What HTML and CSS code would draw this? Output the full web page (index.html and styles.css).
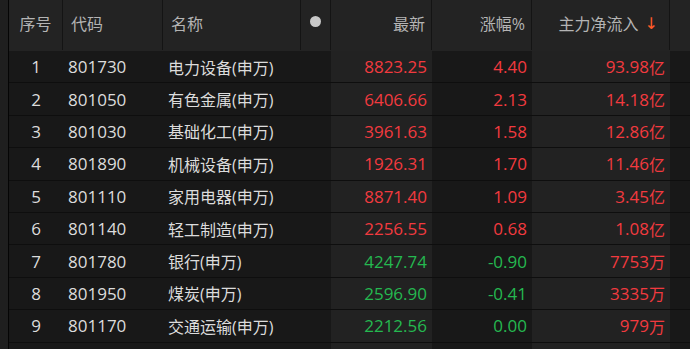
FILE: index.html
```html
<!DOCTYPE html>
<html lang="zh-CN">
<head>
<meta charset="utf-8">
<title>行业资金流向</title>
<link rel="stylesheet" href="styles.css">
</head>
<body>
<div class="page">
  <div class="strip"></div>
  <div class="table">
    <div class="head">
      <div class="hc c-seq">序号</div>
      <div class="hc c-code">代码</div>
      <div class="hc c-name">名称</div>
      <div class="hc c-dot"><span class="dot"></span></div>
      <div class="hc c-num">最新</div>
      <div class="hc c-num">涨幅%</div>
      <div class="hc c-num c-flow">主力净流入<span class="arrow">↓</span></div>
      <div class="hc c-extra"></div>
    </div>

    <div class="row"><div class="c c-seq">1</div><div class="c c-code">801730</div><div class="c c-name">电力设备(申万)</div><div class="c c-dot"></div><div class="c c-num light up">8823.25</div><div class="c c-num up">4.40</div><div class="c c-num light up">93.98<span class="u">亿</span></div><div class="c c-extra"></div></div>
    <div class="row"><div class="c c-seq">2</div><div class="c c-code">801050</div><div class="c c-name">有色金属(申万)</div><div class="c c-dot"></div><div class="c c-num light up">6406.66</div><div class="c c-num up">2.13</div><div class="c c-num light up">14.18<span class="u">亿</span></div><div class="c c-extra"></div></div>
    <div class="row"><div class="c c-seq">3</div><div class="c c-code">801030</div><div class="c c-name">基础化工(申万)</div><div class="c c-dot"></div><div class="c c-num light up">3961.63</div><div class="c c-num up">1.58</div><div class="c c-num light up">12.86<span class="u">亿</span></div><div class="c c-extra"></div></div>
    <div class="row"><div class="c c-seq">4</div><div class="c c-code">801890</div><div class="c c-name">机械设备(申万)</div><div class="c c-dot"></div><div class="c c-num light up">1926.31</div><div class="c c-num up">1.70</div><div class="c c-num light up">11.46<span class="u">亿</span></div><div class="c c-extra"></div></div>
    <div class="row"><div class="c c-seq">5</div><div class="c c-code">801110</div><div class="c c-name">家用电器(申万)</div><div class="c c-dot"></div><div class="c c-num light up">8871.40</div><div class="c c-num up">1.09</div><div class="c c-num light up">3.45<span class="u">亿</span></div><div class="c c-extra"></div></div>
    <div class="row"><div class="c c-seq">6</div><div class="c c-code">801140</div><div class="c c-name">轻工制造(申万)</div><div class="c c-dot"></div><div class="c c-num light up">2256.55</div><div class="c c-num up">0.68</div><div class="c c-num light up">1.08<span class="u">亿</span></div><div class="c c-extra"></div></div>
    <div class="row"><div class="c c-seq">7</div><div class="c c-code">801780</div><div class="c c-name">银行(申万)</div><div class="c c-dot"></div><div class="c c-num light down">4247.74</div><div class="c c-num down">-0.90</div><div class="c c-num light up">7753<span class="u">万</span></div><div class="c c-extra"></div></div>
    <div class="row"><div class="c c-seq">8</div><div class="c c-code">801950</div><div class="c c-name">煤炭(申万)</div><div class="c c-dot"></div><div class="c c-num light down">2596.90</div><div class="c c-num down">-0.41</div><div class="c c-num light up">3335<span class="u">万</span></div><div class="c c-extra"></div></div>
    <div class="row"><div class="c c-seq">9</div><div class="c c-code">801170</div><div class="c c-name">交通运输(申万)</div><div class="c c-dot"></div><div class="c c-num light down">2212.56</div><div class="c c-num down">0.00</div><div class="c c-num light up">979<span class="u">万</span></div><div class="c c-extra"></div></div>
    <div class="row"><div class="c c-seq"></div><div class="c c-code"></div><div class="c c-name"></div><div class="c c-dot"></div><div class="c c-num light"></div><div class="c c-num"></div><div class="c c-num light"></div><div class="c c-extra"></div></div>
  </div>
</div>
</body>
</html>
```

FILE: styles.css
```css
html, body {
  margin: 0;
  padding: 0;
  background: #181818;
  overflow: hidden;
}
body {
  font-family: "Open Sans", "Noto Sans CJK SC", sans-serif;
  font-size: 16px;
  color: #dcdcdc;
}
.page {
  display: flex;
  height: 349px;
  overflow: hidden;
}
.strip {
  width: 8px;
  flex: none;
  background: #1f1f1f;
  border-right: 1px solid #050505;
}
.table {
  flex: 1;
  display: flex;
  flex-direction: column;
}
.head, .row {
  flex: none;
  display: grid;
  grid-template-columns: 54px 100px 138px 30px 101px 100px 138px 1fr;
}
.head {
  height: 51px;
  background: #232323;
  color: #b4b4b4;
}
.hc {
  display: flex;
  align-items: center;
  padding-bottom: 4px;
  border-right: 1px solid #141414;
  height: 50px;
  box-sizing: border-box;
}
.hc.c-extra { border-right: none; }
.hc.c-seq { justify-content: center; }
.hc.c-code, .hc.c-name { padding-left: 8px; }
.hc.c-dot { justify-content: center; padding-bottom: 8px; }
.hc.c-num { justify-content: flex-end; padding-right: 6px; }
.hc.c-flow { padding-right: 11px; }
.dot {
  width: 11px;
  height: 11px;
  border-radius: 50%;
  background: #c8c8c8;
}
.arrow {
  color: #ff5a28;
  margin-left: 6px;
  font-family: "DejaVu Sans", sans-serif;
  font-size: 16px;
}
.row {
  height: 32.4px;
  box-sizing: border-box;
  border-bottom: 1px solid #0e0e0e;
}
.c {
  display: flex;
  align-items: center;
  background: #181818;
  white-space: nowrap;
}
.c.light { background: #222222; }
.c.c-seq { justify-content: center; font-size: 17px; }
.c.c-code { padding-left: 5px; font-size: 17px; }
.c.c-name { padding-left: 5px; }
.c.c-num { justify-content: flex-end; padding-right: 5px; font-size: 17px; }
.u { font-size: 16px; }
.up { color: #f23a3f; }
.down { color: #25b850; }
```
